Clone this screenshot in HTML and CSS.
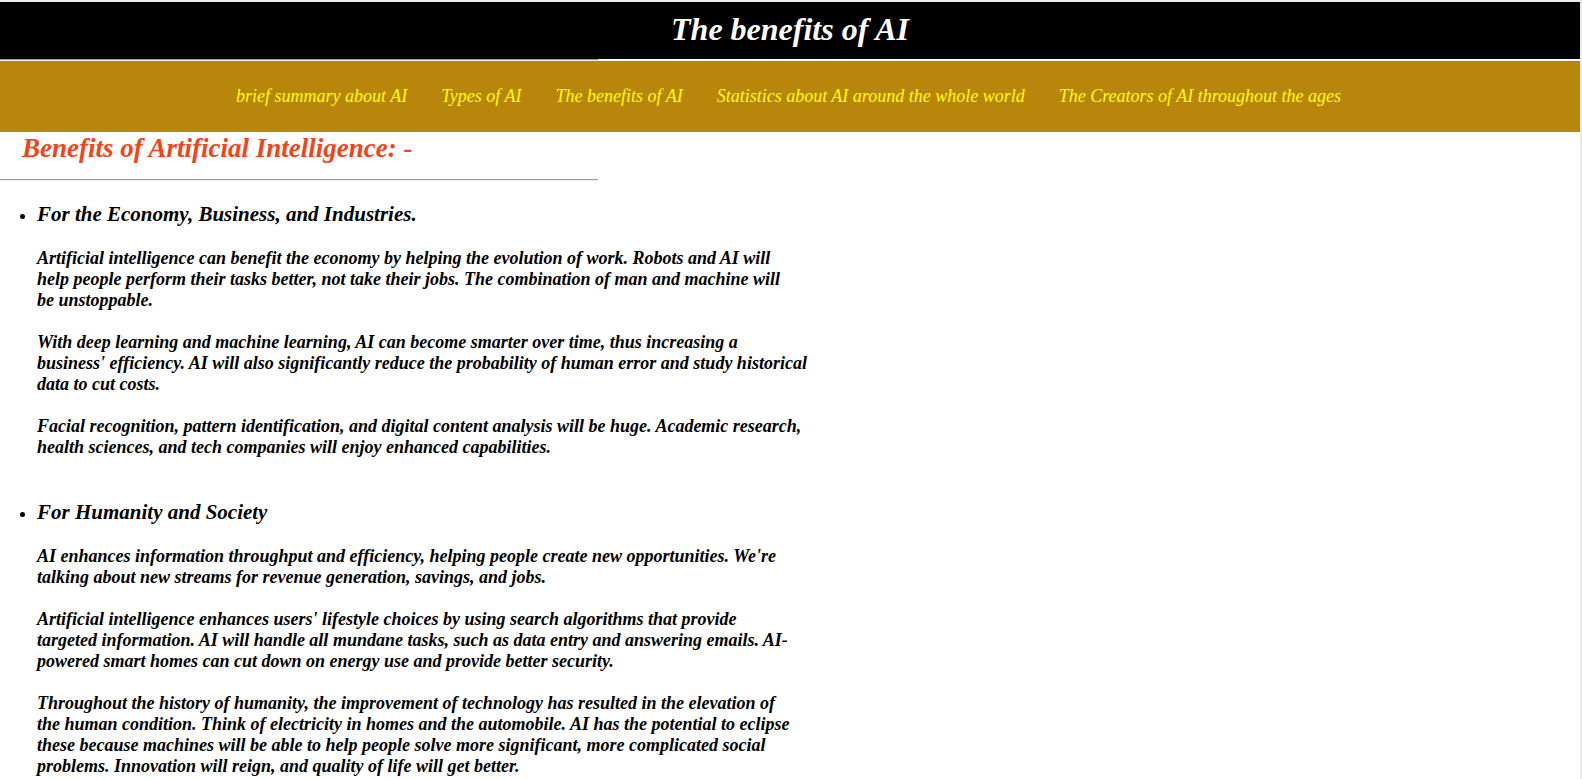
FILE: index.html
```html
<!DOCTYPE html>
<html lang="en">
<head>
<meta charset="utf-8">
<title>The benefits of AI</title>
<link rel="stylesheet" href="styles.css">
</head>
<body>
<header class="top-bar">
  <h1 class="site-title">The benefits of AI</h1>
</header>
<hr class="rule">
<nav class="main-nav">
  <a href="#" class="nav-link">brief summary about AI</a>
  <a href="#" class="nav-link">Types of AI</a>
  <a href="#" class="nav-link">The benefits of AI</a>
  <a href="#" class="nav-link">Statistics about AI around the whole world</a>
  <a href="#" class="nav-link">The Creators of AI throughout the ages</a>
</nav>
<main class="content">
  <h2 class="page-heading">Benefits of Artificial Intelligence: -</h2>
  <hr class="rule rule-heading">
  <ul class="benefit-list">
    <li class="benefit">
      <h3 class="benefit-title">For the Economy, Business, and Industries.</h3>
      <p class="benefit-text">Artificial intelligence can benefit the economy by helping the evolution of work. Robots and AI will<br>help people perform their tasks better, not take their jobs. The combination of man and machine will<br>be unstoppable.</p>
      <p class="benefit-text">With deep learning and machine learning, AI can become smarter over time, thus increasing a<br>business' efficiency. AI will also significantly reduce the probability of human error and study historical<br>data to cut costs.</p>
      <p class="benefit-text">Facial recognition, pattern identification, and digital content analysis will be huge. Academic research,<br>health sciences, and tech companies will enjoy enhanced capabilities.</p>
    </li>
    <li class="benefit">
      <h3 class="benefit-title">For Humanity and Society</h3>
      <p class="benefit-text">AI enhances information throughput and efficiency, helping people create new opportunities. We're<br>talking about new streams for revenue generation, savings, and jobs.</p>
      <p class="benefit-text">Artificial intelligence enhances users' lifestyle choices by using search algorithms that provide<br>targeted information. AI will handle all mundane tasks, such as data entry and answering emails. AI-<br>powered smart homes can cut down on energy use and provide better security.</p>
      <p class="benefit-text">Throughout the history of humanity, the improvement of technology has resulted in the elevation of<br>the human condition. Think of electricity in homes and the automobile. AI has the potential to eclipse<br>these because machines will be able to help people solve more significant, more complicated social<br>problems. Innovation will reign, and quality of life will get better.</p>
    </li>
  </ul>
</main>
</body>
</html>
```

FILE: styles.css
```css
html {
  background: #ececec;
}

body {
  margin: 2px 0 0 0;
  padding-bottom: 40px;
  width: 1580px;
  background: #ffffff;
  font-family: "Liberation Serif", "Times New Roman", serif;
  font-size: 18px;
  color: #000000;
}

.top-bar {
  background: #000000;
  height: 57px;
  display: flex;
  justify-content: center;
}

.site-title {
  margin: 0;
  font-size: 32px;
  font-weight: bold;
  font-style: italic;
  color: #ffffff;
  line-height: 54px;
}

.rule {
  display: block;
  width: 598px;
  margin: 0;
  border: 0;
  border-top: 1px solid #9a9a9a;
  border-bottom: 1px solid #eeeeee;
  height: 0;
}

.main-nav {
  background: #b8860b;
  height: 71px;
  display: flex;
  justify-content: center;
  align-items: center;
  gap: 34px;
  padding-right: 3px;
}

.nav-link {
  color: #ffff00;
  font-style: italic;
  font-size: 18px;
  text-decoration: none;
  line-height: 71px;
}

.page-heading {
  margin: 0;
  padding: 1px 0 0 22px;
  font-size: 27px;
  font-weight: bold;
  font-style: italic;
  color: #f24418;
}

.rule-heading {
  margin-top: 15px;
}

.benefit-list {
  margin: 18px 0 0 0;
  padding-left: 37px;
}

.benefit {
  margin-bottom: 42px;
}

.benefit-title {
  margin: 21px 0;
  font-size: 21px;
  font-weight: bold;
  font-style: italic;
}

.benefit-text {
  width: 790px;
  margin: 21px 0;
  font-size: 18px;
  font-weight: bold;
  font-style: italic;
}
```
